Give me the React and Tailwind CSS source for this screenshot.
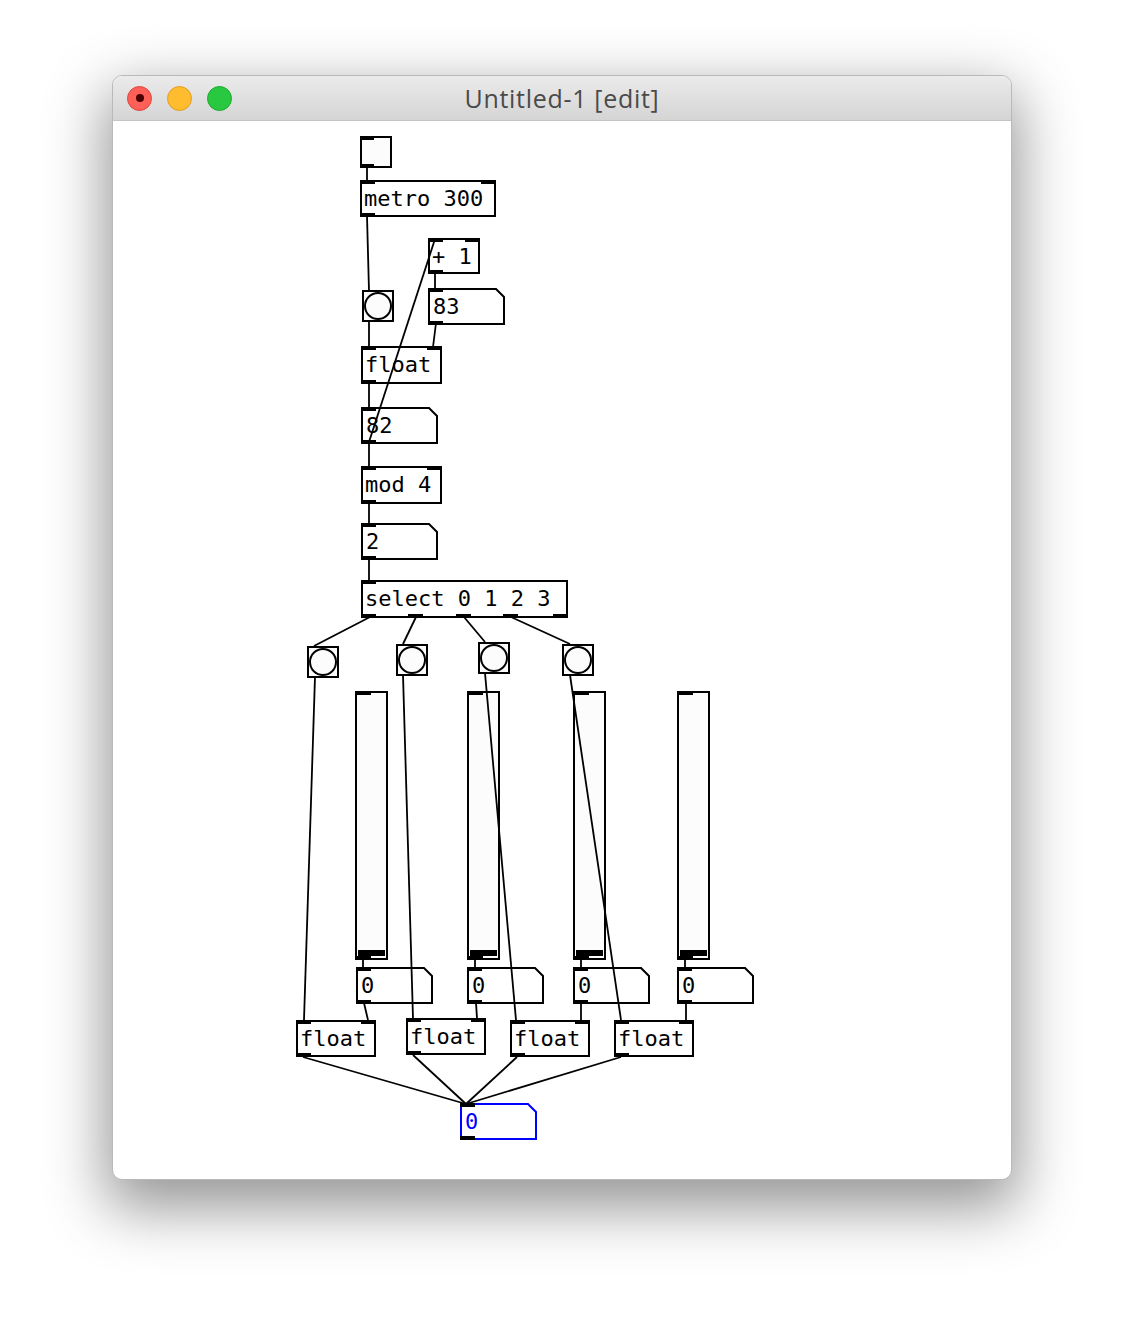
const MONO = '"DejaVu Sans Mono", monospace'

// outlet/inlet helpers: side 'l' or 'r'
function Bars({ x, y, w, h, ins = [], outs = [], bw = 15 }) {
  const pos = (s) => (s === 'l' ? x - 1 : x + w - bw + 1)
  return (
    <g fill="#000">
      {ins.map((s, i) => (
        <rect key={'i' + i} x={pos(s)} y={y - 1} width={bw} height={4} />
      ))}
      {outs.map((s, i) => (
        <rect key={'o' + i} x={typeof s === 'number' ? s : pos(s)} y={y + h - 3} width={bw} height={4} />
      ))}
    </g>
  )
}

function Obj({ x, y, w, h = 35, text, ins = ['l'], outs = ['l'] }) {
  return (
    <g>
      <rect x={x} y={y} width={w} height={h} fill="#fff" stroke="#000" strokeWidth="2" />
      <text x={x + 3} y={y + 25} fontFamily={MONO} fontSize="22" fill="#000">
        {text}
      </text>
      <Bars x={x} y={y} w={w} h={h} ins={ins} outs={outs} />
    </g>
  )
}

function Num({ x, y, w = 75, h = 35, text, color = '#000' }) {
  const d = `M${x},${y} H${x + w - 8} L${x + w},${y + 8} V${y + h} H${x} Z`
  return (
    <g>
      <path d={d} fill="#fff" stroke={color} strokeWidth="2" />
      <text x={x + 4} y={y + 25} fontFamily={MONO} fontSize="22" fill={color}>
        {text}
      </text>
      <Bars x={x} y={y} w={w} h={h} ins={['l']} outs={['l']} />
    </g>
  )
}

function Bang({ x, y }) {
  return (
    <g>
      <rect x={x} y={y} width={30} height={30} fill="#fcfcfc" stroke="#000" strokeWidth="2" />
      <circle cx={x + 15} cy={y + 15} r={13} fill="#fcfcfc" stroke="#000" strokeWidth="2" />
    </g>
  )
}

function Slider({ x, y = 692, w = 31, h = 267 }) {
  return (
    <g>
      <rect x={x} y={y} width={w} height={h} fill="#fcfcfc" stroke="#000" strokeWidth="2" />
      <rect x={x - 1} y={y - 1} width={16} height={4} fill="#000" />
      <rect x={x + 2} y={y + h - 9} width={w - 4} height={6} fill="#000" />
      <rect x={x - 1} y={y + h - 3} width={16} height={4} fill="#000" />
    </g>
  )
}

const wires = [
  [367, 167, 367, 181],
  [367, 216, 369, 291],
  [369, 321, 369, 347],
  [369, 383, 369, 408],
  [369, 442, 435, 239],
  [435, 273, 435, 289],
  [436, 323, 433, 347],
  [369, 443, 369, 467],
  [369, 503, 369, 524],
  [369, 559, 369, 581],
  [370, 617, 314, 646],
  [416, 617, 403, 644],
  [464, 617, 485, 642],
  [511, 617, 570, 644],
  [315, 677, 304, 1020],
  [403, 675, 413, 1018],
  [485, 673, 516, 1020],
  [570, 675, 621, 1020],
  [363, 959, 363, 968],
  [475, 959, 475, 968],
  [581, 959, 581, 968],
  [685, 959, 685, 968],
  [364, 1003, 368, 1020],
  [476, 1003, 477, 1018],
  [581, 1003, 581, 1020],
  [686, 1003, 686, 1020],
  [303, 1057, 466, 1104],
  [413, 1055, 466, 1104],
  [517, 1057, 466, 1104],
  [621, 1057, 466, 1104],
]

function Patch() {
  return (
    <svg width="898" height="1058" viewBox="113 121 898 1058" className="block">
      {/* toggle */}
      <rect x={361} y={137} width={30} height={30} fill="#fcfcfc" stroke="#000" strokeWidth="2" />
      <Bars x={361} y={137} w={30} h={30} ins={['l']} outs={['l']} bw={14} />

      <Obj x={361} y={181} w={134} text="metro 300" ins={['l', 'r']} />
      <Obj x={429} y={239} w={50} h={34} text="+ 1" ins={['l', 'r']} />
      <Num x={429} y={289} text="83" />
      <Bang x={363} y={291} />
      <Obj x={362} y={347} w={79} h={36} text="float" ins={['l', 'r']} />
      <Num x={362} y={408} text="82" />
      <Obj x={362} y={467} w={79} h={36} text="mod 4" ins={['l', 'r']} />
      <Num x={362} y={524} text="2" />
      <Obj
        x={362}
        y={581}
        w={205}
        h={36}
        text="select 0 1 2 3"
        ins={['l']}
        outs={[361, 408, 456, 503, 'r']}
      />

      <Bang x={308} y={647} />
      <Bang x={397} y={645} />
      <Bang x={479} y={643} />
      <Bang x={563} y={645} />

      <Slider x={356} />
      <Slider x={468} />
      <Slider x={574} />
      <Slider x={678} />

      <Num x={357} y={968} text="0" />
      <Num x={468} y={968} text="0" />
      <Num x={574} y={968} text="0" />
      <Num x={678} y={968} text="0" />

      <Obj x={297} y={1021} w={78} h={35} text="float" ins={['l', 'r']} />
      <Obj x={407} y={1019} w={78} h={35} text="float" ins={['l', 'r']} />
      <Obj x={511} y={1021} w={78} h={35} text="float" ins={['l', 'r']} />
      <Obj x={615} y={1021} w={78} h={35} text="float" ins={['l', 'r']} />

      <Num x={461} y={1104} text="0" color="#0000ff" />

      <g stroke="#000" strokeWidth="1.8" fill="none">
        {wires.map(([a, b, c, d], i) => (
          <line key={i} x1={a} y1={b} x2={c} y2={d} />
        ))}
      </g>
    </svg>
  )
}

function Light({ bg, border, dot }) {
  return (
    <div
      className={`w-[25px] h-[25px] rounded-full border flex items-center justify-center ${bg} ${border}`}
    >
      {dot && <div className="w-[8px] h-[8px] rounded-full bg-[#4c0002]" />}
    </div>
  )
}

export default function App() {
  return (
    <div className="w-[1124px] h-[1328px] bg-white pt-[75px] pl-[112px]">
      <div className="w-[900px] h-[1105px] rounded-[10px] overflow-hidden bg-white border border-[#b9b9b9] shadow-[0_22px_60px_6px_rgba(0,0,0,0.42)] flex flex-col">
        <div className="h-[45px] shrink-0 relative flex items-center bg-gradient-to-b from-[#ebebeb] to-[#d5d5d5] border-b border-[#c4c4c4]">
          <div className="flex gap-[15px] pl-[14px]">
            <Light bg="bg-[#fe5f57]" border="border-[#e14640]" dot />
            <Light bg="bg-[#febc2e]" border="border-[#dfa023]" />
            <Light bg="bg-[#28c840]" border="border-[#1eaa2e]" />
          </div>
          <div className="absolute inset-0 flex items-center justify-center pt-[2px] text-[25px] tracking-[0.7px] text-[#4a4a4a] font-['Open_Sans',sans-serif]">
            Untitled-1 [edit]
          </div>
        </div>
        <div className="flex-1">
          <Patch />
        </div>
      </div>
    </div>
  )
}
